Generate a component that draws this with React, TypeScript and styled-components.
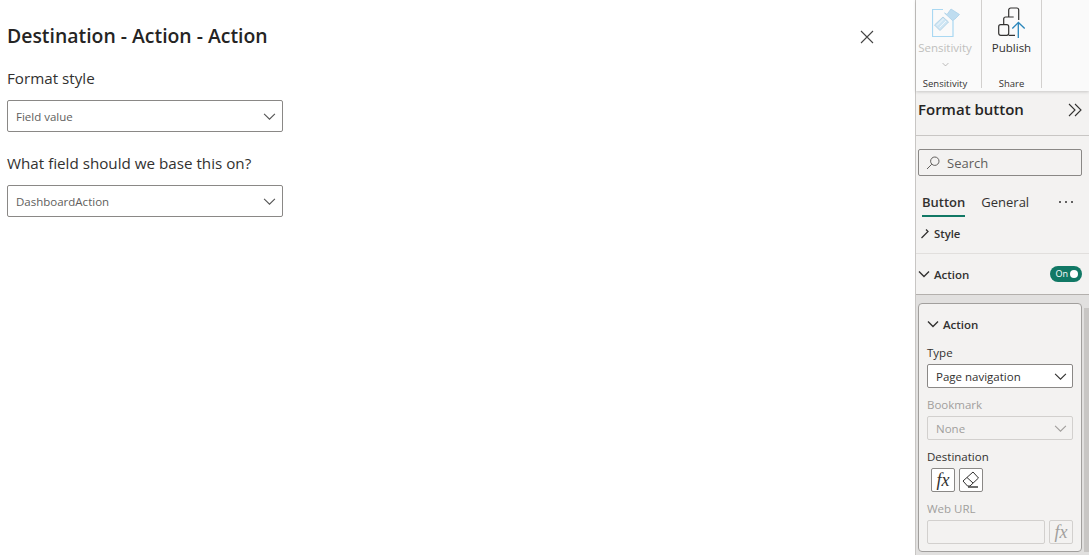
import React from "react";
import styled, { createGlobalStyle } from "styled-components";

const Global = createGlobalStyle`
  html, body { margin: 0; padding: 0; background: #fff; }
  body { font-family: "Open Sans", "Noto Sans", "Liberation Sans", sans-serif; color: #252423; }
  #root { width: 1089px; height: 555px; overflow: hidden; }
`;

const Page = styled.div`
  display: flex;
  width: 1089px;
  height: 555px;
  overflow: hidden;
`;

const Dialog = styled.main`
  width: 915px;
  flex: none;
  background: #fff;
  padding: 23px 0 0 7px;
  box-sizing: border-box;
`;

const TitleRow = styled.div`
  display: flex;
  align-items: center;
  justify-content: space-between;
  height: 26px;
  padding-right: 41px;
  margin-bottom: 19px;
`;

const Title = styled.h1`
  margin: 0;
  font-size: 19.4px;
  line-height: 26px;
  font-weight: 600;
  color: #252423;
`;

const CloseButton = styled.span`
  display: flex;
  width: 14px;
  height: 14px;
  margin-top: 1px;
  color: #444;
`;

const FieldLabel = styled.div`
  font-size: 15.2px;
  line-height: 20px;
  color: #323130;
  margin-bottom: 12px;
`;

const DialogSelect = styled.div`
  display: flex;
  align-items: center;
  justify-content: space-between;
  box-sizing: border-box;
  width: 276px;
  height: 32px;
  padding: 0 6px 0 8px;
  border: 1px solid #8a8886;
  border-radius: 2px;
  font-size: 11.5px;
  color: #605e5c;
  margin-bottom: 21px;
`;

const Side = styled.aside`
  width: 174px;
  flex: none;
  display: flex;
  flex-direction: column;
  border-left: 1px solid #c8c6c4;
  box-sizing: border-box;
  background: #f3f2f1;
`;

const Ribbon = styled.div`
  height: 91px;
  flex: none;
  display: flex;
  background: #fafafa;
  box-shadow: 0 1px 3px rgba(0, 0, 0, 0.18);
  position: relative;
`;

const RibbonGroup = styled.div<{ $w: number; $shift?: number }>`
  width: ${(p) => p.$w}px;
  height: 88px;
  box-sizing: border-box;
  border-right: 1px solid #d2d0ce;
  padding-right: ${(p) => p.$shift ?? 0}px;
  display: flex;
  flex-direction: column;
  align-items: center;
`;

const RibbonIcon = styled.div<{ $nudge?: number }>`
  height: 38px;
  margin-top: 4px;
  margin-left: ${(p) => p.$nudge ?? 0}px;
  display: flex;
  align-items: center;
  justify-content: center;
`;

const RibbonText = styled.div<{ $off?: boolean }>`
  font-size: 11.5px;
  line-height: 16px;
  margin-top: -2px;
  color: ${(p) => (p.$off ? "#c0bfbd" : "#323130")};
`;

const RibbonCaret = styled.div`
  height: 12px;
  margin-top: 5px;
  color: #a19f9d;
  display: flex;
`;

const RibbonCaption = styled.div`
  font-size: 9.5px;
  line-height: 8px;
  color: #323130;
  margin-top: auto;
`;

const PaneHeader = styled.div`
  height: 45px;
  flex: none;
  box-sizing: border-box;
  border-bottom: 1px solid #c8c6c4;
  display: flex;
  justify-content: space-between;
  padding: 9px 7px 0 2px;
`;

const PaneTitle = styled.div`
  font-size: 15px;
  line-height: 20px;
  margin-top: -1px;
  font-weight: 600;
  color: #252423;
`;

const PaneBody = styled.div`
  padding: 13px 7px 0 2px;
`;

const Search = styled.div`
  display: flex;
  align-items: center;
  gap: 7px;
  height: 27px;
  box-sizing: border-box;
  border: 1px solid #8a8886;
  border-radius: 2px;
  padding: 0 7px;
  font-size: 13px;
  color: #605e5c;
`;

const Tabs = styled.div`
  display: flex;
  align-items: flex-start;
  padding: 17px 0 0 4px;
  height: 53px;
  box-sizing: border-box;
`;

const Tab = styled.div<{ $on?: boolean }>`
  font-size: 13px;
  line-height: 18px;
  font-weight: ${(p) => (p.$on ? 600 : 400)};
  color: #323130;
  height: 24px;
  margin-right: 16px;
  box-sizing: border-box;
  border-bottom: ${(p) => (p.$on ? "2px solid #117865" : "none")};
`;

const More = styled.div`
  margin-left: auto;
  margin-right: 9px;
  display: flex;
  gap: 4px;
  padding-top: 8px;
`;

const Dot = styled.i`
  width: 2px;
  height: 2px;
  background: #323130;
  border-radius: 1px;
`;

const ClippedRow = styled.div`
  height: 25px;
  margin-right: -7px;
  margin-left: -2px;
  box-sizing: border-box;
  border-bottom: 1px solid #e1dfdd;
  overflow: hidden;
  display: flex;
  align-items: flex-start;
  gap: 4px;
  padding-left: 5px;
  font-size: 11.3px;
  line-height: 15px;
  font-weight: 600;
  color: #323130;
`;

const ClippedText = styled.span`
  margin-top: -3px;
`;

const ActionRow = styled.div`
  height: 41px;
  margin-left: -2px;
  margin-right: -7px;
  padding: 0 7px 0 2px;
  box-sizing: border-box;
  border-bottom: 1px solid #b3b0ad;
  display: flex;
  align-items: center;
  gap: 4px;
  font-size: 11.5px;
  font-weight: 600;
  color: #323130;
`;

const Toggle = styled.div`
  margin-left: auto;
  width: 32px;
  height: 16px;
  border-radius: 8px;
  background: #117865;
  color: #fff;
  font-size: 9px;
  line-height: 16px;
  font-weight: 400;
  display: flex;
  align-items: center;
  justify-content: flex-end;
  gap: 2px;
  padding-right: 4px;
  box-sizing: border-box;
`;

const Knob = styled.i`
  width: 8px;
  height: 8px;
  border-radius: 50%;
  background: #fff;
`;

const Well = styled.div`
  flex: 1;
  min-height: 0;
  background: #e1e0df;
  display: flex;
  padding: 8px 1px 0 2px;
  gap: 2px;
  overflow: hidden;
`;

const Card = styled.div`
  width: 164px;
  height: 249px;
  flex: none;
  box-sizing: border-box;
  background: #f3f2f1;
  border: 1px solid #a19f9d;
  border-radius: 4px;
  padding: 10px 8px 0;
`;

const Scrollbar = styled.div`
  width: 5px;
  height: 244px;
  margin-top: 5px;
  background: #c8c6c4;
  flex: none;
`;

const CardHeader = styled.div`
  display: flex;
  align-items: center;
  gap: 4px;
  height: 20px;
  font-size: 11.5px;
  font-weight: 600;
  color: #323130;
  margin-bottom: 11px;
`;

const CardLabel = styled.div<{ $off?: boolean }>`
  font-size: 11.5px;
  line-height: 16px;
  margin-bottom: 3px;
  color: ${(p) => (p.$off ? "#a19f9d" : "#323130")};
`;

const CardSelect = styled.div<{ $off?: boolean }>`
  height: 24px;
  box-sizing: border-box;
  display: flex;
  align-items: center;
  justify-content: space-between;
  padding: 0 5px 0 8px;
  border: 1px solid ${(p) => (p.$off ? "#d2d0ce" : "#8a8886")};
  border-radius: 2px;
  background: ${(p) => (p.$off ? "#f3f2f1" : "#fff")};
  color: ${(p) => (p.$off ? "#a19f9d" : "#323130")};
  font-size: 11.5px;
  margin-bottom: 9px;
`;

const IconRow = styled.div`
  display: flex;
  gap: 4px;
  padding-left: 4px;
  margin-bottom: 9px;
`;

const SquareButton = styled.div<{ $off?: boolean }>`
  width: 24px;
  height: 24px;
  flex: none;
  box-sizing: border-box;
  display: flex;
  align-items: center;
  justify-content: center;
  border: 1px solid ${(p) => (p.$off ? "#d2d0ce" : "#8a8886")};
  border-radius: 2px;
  background: ${(p) => (p.$off ? "#f3f2f1" : "#fff")};
  color: ${(p) => (p.$off ? "#a19f9d" : "#323130")};
  font-family: "Liberation Serif", serif;
  font-style: italic;
  font-size: 18px;
  line-height: 20px;
`;

const UrlRow = styled.div`
  display: flex;
  gap: 4px;
`;

const UrlInput = styled.div`
  flex: 1;
  height: 24px;
  box-sizing: border-box;
  border: 1px solid #d2d0ce;
  border-radius: 2px;
`;

const Chevron = ({ size = 12, color = "currentColor", w = 1.2 }: { size?: number; color?: string; w?: number }) => (
  <svg width={size} height={size} viewBox="0 0 12 12" fill="none" stroke={color} strokeWidth={w}>
    <path d="M1 3.5 L6 8.5 L11 3.5" />
  </svg>
);

export default function App() {
  return (
    <Page>
      <Global />
      <Dialog>
        <TitleRow>
          <Title>Destination - Action - Action</Title>
          <CloseButton>
            <svg width="14" height="14" viewBox="0 0 14 14" stroke="currentColor" strokeWidth="1.1" fill="none">
              <path d="M1 1 L13 13 M13 1 L1 13" />
            </svg>
          </CloseButton>
        </TitleRow>
        <FieldLabel>Format style</FieldLabel>
        <DialogSelect>
          Field value
          <Chevron size={13} color="#555" w={1} />
        </DialogSelect>
        <FieldLabel>What field should we base this on?</FieldLabel>
        <DialogSelect>
          DashboardAction
          <Chevron size={13} color="#555" w={1} />
        </DialogSelect>
      </Dialog>
      <Side>
        <Ribbon>
          <RibbonGroup $w={66} $shift={7}>
            <RibbonIcon $nudge={3}>
              <svg width="29" height="30" viewBox="0 0 29 30" fill="none">
                <path d="M11 1.5 H0.5 V28.5 H21 V12" stroke="#a9d8f2" strokeWidth="1.2" />
                <path d="M2.5 17 L11 9 L16.5 14 L8 22.5 Z" fill="#cfe6f4" stroke="#b4d3e6" />
                <path d="M5 17.5 L11.5 11 M7.5 19.5 L14 13" stroke="#f2f8fc" strokeWidth="1" />
                <path d="M12.5 5 L15 6.5 L19 1 L27.5 6.5 L23 11 L20.5 12.5 Z" fill="#bfddf0" stroke="#a9d0e8" strokeWidth="0.8" />
              </svg>
            </RibbonIcon>
            <RibbonText $off>Sensitivity</RibbonText>
            <RibbonCaret>
              <Chevron size={7} color="#a19f9d" />
            </RibbonCaret>
            <RibbonCaption>Sensitivity</RibbonCaption>
          </RibbonGroup>
          <RibbonGroup $w={60}>
            <RibbonIcon>
              <svg width="28" height="32" viewBox="0 0 28 32" fill="none">
                <rect x="0.7" y="17.7" width="10" height="10.6" rx="2" stroke="#323130" strokeWidth="1.2" />
                <path d="M5.7 17.7 V12 A2 2 0 0 1 7.7 10 H15.7 M10.7 28.3 H17" stroke="#323130" strokeWidth="1.2" />
                <path d="M10.7 10 V3 A2 2 0 0 1 12.7 1 H18.7 A2 2 0 0 1 20.7 3 V13" stroke="#323130" strokeWidth="1.2" />
                <path d="M20.3 31 V16" stroke="#2a86bb" strokeWidth="1.3" />
                <path d="M14.3 21.5 L20.4 15.5 L26.7 21.5" stroke="#2a86bb" strokeWidth="1.3" />
              </svg>
            </RibbonIcon>
            <RibbonText>Publish</RibbonText>
            <RibbonCaption>Share</RibbonCaption>
          </RibbonGroup>
        </Ribbon>
        <PaneHeader>
          <PaneTitle>Format button</PaneTitle>
          <svg width="14" height="20" viewBox="0 0 14 20" fill="none" stroke="#323130" strokeWidth="1.1">
            <path d="M1 4 L7 10 L1 16 M7 4 L13 10 L7 16" />
          </svg>
        </PaneHeader>
        <PaneBody>
          <Search>
            <svg width="14" height="14" viewBox="0 0 14 14" fill="none" stroke="#605e5c" strokeWidth="1">
              <circle cx="8.8" cy="5.2" r="4.2" />
              <path d="M5.8 8.2 L1 13" />
            </svg>
            Search
          </Search>
          <Tabs>
            <Tab $on>Button</Tab>
            <Tab>General</Tab>
            <More>
              <Dot />
              <Dot />
              <Dot />
            </More>
          </Tabs>
          <ClippedRow>
            <svg width="9" height="12" viewBox="0 0 9 12" fill="none" stroke="#323130" strokeWidth="1.3">
              <path d="M0.5 9 L7 2.5 L5 0.5" />
            </svg>
            <ClippedText>Style</ClippedText>
          </ClippedRow>
          <ActionRow>
            <Chevron size={12} color="#323130" w={1.4} />
            Action
            <Toggle>
              On
              <Knob />
            </Toggle>
          </ActionRow>
        </PaneBody>
        <Well>
          <Card>
            <CardHeader>
              <Chevron size={12} color="#323130" w={1.4} />
              Action
            </CardHeader>
            <CardLabel>Type</CardLabel>
            <CardSelect>
              Page navigation
              <Chevron size={13} color="#323130" w={1} />
            </CardSelect>
            <CardLabel $off>Bookmark</CardLabel>
            <CardSelect $off>
              None
              <Chevron size={13} color="#a19f9d" w={1} />
            </CardSelect>
            <CardLabel>Destination</CardLabel>
            <IconRow>
              <SquareButton>fx</SquareButton>
              <SquareButton>
                <svg width="18" height="18" viewBox="0 0 18 18" fill="none" stroke="#323130" strokeWidth="1">
                  <path d="M1 10 L11 1 L16.5 7 L8 15 H5.5 Z" />
                  <path d="M5 6.5 L11 12" />
                  <path d="M6 16 H16" strokeWidth="1.4" />
                </svg>
              </SquareButton>
            </IconRow>
            <CardLabel $off>Web URL</CardLabel>
            <UrlRow>
              <UrlInput />
              <SquareButton $off>fx</SquareButton>
            </UrlRow>
          </Card>
          <Scrollbar />
        </Well>
      </Side>
    </Page>
  );
}
